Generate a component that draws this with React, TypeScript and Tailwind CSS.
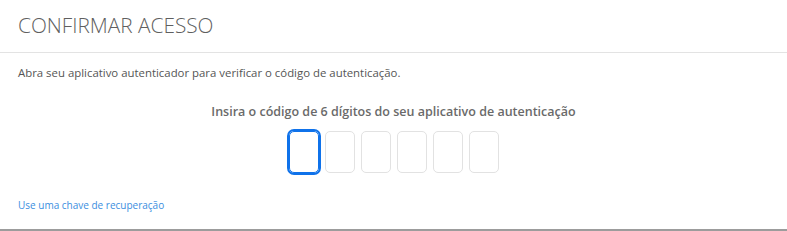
export default function App() {
  const digits = [0, 1, 2, 3, 4, 5];
  return (
    <div className="w-[787px] h-[231px] bg-white font-['Open_Sans',sans-serif] border-b-2 border-[#9c9c9c]">
      <div className="h-[53px] px-[18px] flex items-center border-b border-[#e3e3e3]">
        <h1 className="text-[20.8px] font-light text-[#5f5f5f]">CONFIRMAR ACESSO</h1>
      </div>
      <div className="px-[18px] pt-[12px]">
        <p className="text-[11.4px] leading-[16px] text-[#555555]">
          Abra seu aplicativo autenticador para verificar o código de autenticação.
        </p>
        <p className="mt-[22px] text-center text-[12.5px] leading-[18px] font-semibold text-[#6a6a6a]">
          Insira o código de 6 dígitos do seu aplicativo de autenticação
        </p>
        <div className="mt-[10px] flex justify-center gap-[6px]">
          {digits.map((d) => (
            <input
              key={d}
              maxLength={1}
              className={
                d === 0
                  ? "w-[30px] h-[42px] rounded-[5px] border border-[#0f72ea] outline-2 outline-[#0f72ea] text-center"
                  : "w-[30px] h-[42px] rounded-[5px] border border-[#e2e2e2] text-center"
              }
            />
          ))}
        </div>
        <a className="block mt-[25px] text-[10px] leading-[14px] text-[#3b8ee0]">Use uma chave de recuperação</a>
      </div>
    </div>
  );
}
